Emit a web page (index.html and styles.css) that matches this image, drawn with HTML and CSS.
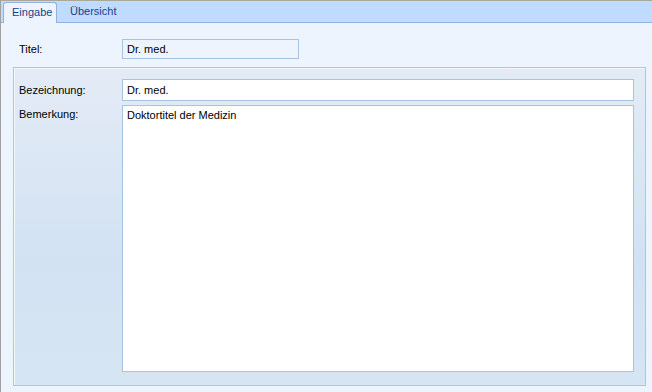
FILE: index.html
```html
<!DOCTYPE html>
<html>
<head>
    <title>Titel bearbeiten</title>
    <link rel="stylesheet" href="styles.css">
</head>
<body>
<div class="window">
    <div class="tabs">
        <div class="tab active">Eingabe</div>
        <div class="tab">Übersicht</div>
    </div>
    <div class="content">
        <div class="row title-row">
            <label for="titel">Titel:</label>
            <input id="titel" class="field readonly" value="Dr. med." readonly>
        </div>
        <div class="group">
            <div class="row">
                <label for="bezeichnung">Bezeichnung:</label>
                <input id="bezeichnung" class="field" value="Dr. med.">
            </div>
            <div class="row grow">
                <label for="bemerkung" class="top">Bemerkung:</label>
                <textarea id="bemerkung" class="field memo">Doktortitel der Medizin</textarea>
            </div>
        </div>
    </div>
</div>
</body>
</html>
```

FILE: styles.css
```css
html, body {
    margin: 0;
    padding: 0;
}

body {
    font-family: "Liberation Sans", Arial, sans-serif;
    font-size: 11px;
    color: #000;
    background-color: #eef4fd;
}

.window {
    width: 651px;
    height: 391px;
    border-top: 1px solid #aca899;
    border-left: 1px solid #a0a0a0;
    display: flex;
    flex-direction: column;
    overflow: hidden;
}

.tabs {
    height: 21px;
    background-color: #bfdbff;
    border-bottom: 1px solid #8db2e3;
    display: flex;
    align-items: flex-end;
    padding-left: 2px;
}

.tab {
    height: 20px;
    line-height: 18px;
    color: #15428b;
    padding: 0 14px 0 13px;
}

.tab.active {
    padding: 0 0 0 8px;
    box-sizing: border-box;
    width: 54px;
    background-color: #eef4fd;
    border: 1px solid #8db2e3;
    border-bottom: none;
    border-radius: 3px 3px 0 0;
    margin-bottom: -1px;
    height: 21px;
    line-height: 19px;
}

.content {
    flex: 1;
    display: flex;
    flex-direction: column;
    padding: 16px 6px 6px 12px;
}

.row {
    display: flex;
    align-items: center;
}

.row label {
    width: 103px;
    padding-left: 6px;
    flex-shrink: 0;
}

.title-row {
    height: 20px;
    margin-bottom: 8px;
}

.field {
    font-family: "Liberation Sans", Arial, sans-serif;
    font-size: 11px;
    color: #000;
    border: 1px solid #a9c2e1;
    background-color: #fff;
    padding: 0 4px;
    margin: 0;
    outline: none;
    box-sizing: border-box;
}

.readonly {
    width: 177px;
    height: 20px;
    background-color: #eef4fd;
}

.group {
    flex: 1;
    display: flex;
    flex-direction: column;
    gap: 4px;
    border: 1px solid #b5c5d9;
    box-shadow: inset 1px 1px 0 #f4f8fd;
    background: linear-gradient(#e4ebf6, #d2e2f2 60%, #d6e5f3);
    padding: 11px 11px 13px 0;
}

.group .row label {
    width: 103px;
    padding-left: 5px;
}

.group .field {
    flex: 1;
    height: 22px;
}

.group .grow {
    align-items: flex-start;
}

.row label.top {
    padding-top: 3px;
}

.group .memo {
    height: 267px;
    resize: none;
    padding-top: 3px;
    line-height: 13px;
    overflow: hidden;
}
```
